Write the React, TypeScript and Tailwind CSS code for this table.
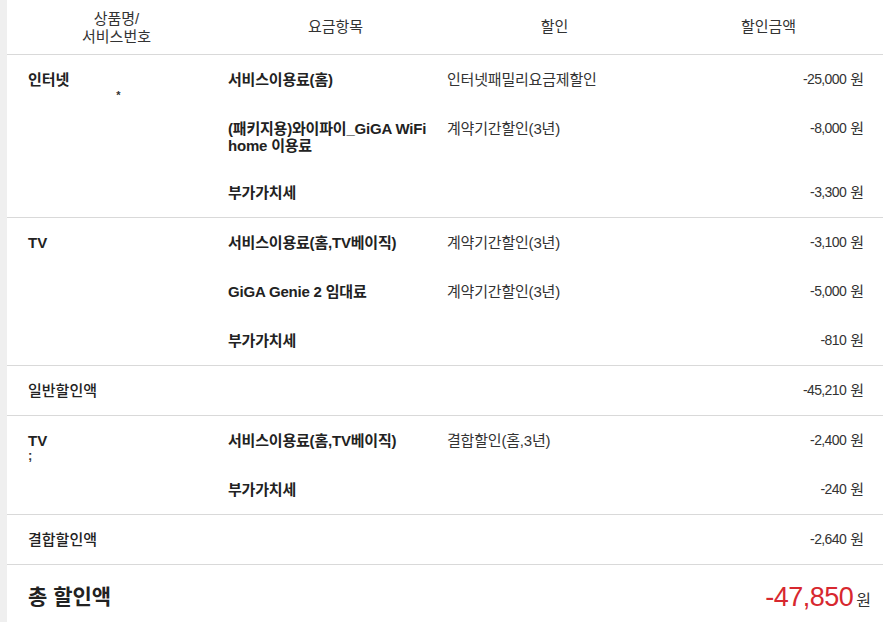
import React from "react";

type Item = { name: string; discount?: string; amount: string; tight?: boolean };
type Group = { label: string; sub?: string; subAlign?: "center" | "left"; items: Item[] };

const font = { fontFamily: '"Liberation Sans", "Noto Sans CJK KR", sans-serif' };

function Amount({ value }: { value: string }) {
  return (
    <div className="flex justify-end items-center gap-[4px] whitespace-nowrap h-[17px] leading-[17px]">
      <span className="text-[14px] tracking-[-0.6px]">{value}</span>
      <span className="text-[15px]">원</span>
    </div>
  );
}

function GroupRow({ group }: { group: Group }) {
  return (
    <div className="flex border-b border-[#d9d9d9]">
      <div className="w-[219px] shrink-0 pl-[21px] pt-4 leading-[17px]">
        <div className="font-bold text-[#222]">{group.label}</div>
        {group.sub && (
          <div
            className={
              group.subAlign === "center"
                ? "text-center pr-[17px] pt-[1px] text-[11px] leading-[12px] font-bold"
                : "text-[13px] leading-[14px] font-bold"
            }
          >
            {group.sub}
          </div>
        )}
      </div>
      <div className="flex-1 flex flex-col">
        {group.items.map((it, i) => (
          <div
            key={i}
            className={it.tight ? "grid grid-cols-3 pt-4 pb-[14px] leading-[17px]" : "grid grid-cols-3 py-4 leading-[17px]"}
          >
            <div className="pl-[2px] font-semibold text-[#222] tracking-[-0.2px]">{it.name}</div>
            <div className="pl-[2px] tracking-[-0.2px]">{it.discount}</div>
            <div className="pr-[19px]">
              <Amount value={it.amount} />
            </div>
          </div>
        ))}
      </div>
    </div>
  );
}

function SummaryRow({ label, amount }: { label: string; amount: string }) {
  return (
    <div className="flex items-center h-[50px] border-b border-[#d9d9d9] leading-[17px]">
      <div className="flex-1 pl-[21px] font-medium text-[#222]">{label}</div>
      <div className="pr-[19px]">
        <Amount value={amount} />
      </div>
    </div>
  );
}

export default function App() {
  const groups1: Group[] = [
    {
      label: "인터넷",
      sub: "*",
      subAlign: "center",
      items: [
        { name: "서비스이용료(홈)", discount: "인터넷패밀리요금제할인", amount: "-25,000" },
        { name: "(패키지용)와이파이_GiGA WiFi home 이용료", discount: "계약기간할인(3년)", amount: "-8,000", tight: true },
        { name: "부가가치세", amount: "-3,300" },
      ],
    },
    {
      label: "TV",
      items: [
        { name: "서비스이용료(홈,TV베이직)", discount: "계약기간할인(3년)", amount: "-3,100" },
        { name: "GiGA Genie 2 임대료", discount: "계약기간할인(3년)", amount: "-5,000" },
        { name: "부가가치세", amount: "-810" },
      ],
    },
  ];
  const groups2: Group[] = [
    {
      label: "TV",
      sub: ";",
      subAlign: "left",
      items: [
        { name: "서비스이용료(홈,TV베이직)", discount: "결합할인(홈,3년)", amount: "-2,400" },
        { name: "부가가치세", amount: "-240" },
      ],
    },
  ];

  return (
    <div className="flex min-h-[622px] bg-white text-[15px] text-[#333]" style={font}>
      <div className="w-[7px] shrink-0 bg-[#efefef]" />
      <div className="flex-1">
        <div className="grid grid-cols-4 h-[55px] items-center border-b border-[#d9d9d9] text-center leading-[18px] text-[#333]">
          <div className="pt-[1px]">
            상품명/
            <br />
            서비스번호
          </div>
          <div>요금항목</div>
          <div>할인</div>
          <div className="pr-[10px]">할인금액</div>
        </div>
        {groups1.map((g, i) => (
          <GroupRow key={i} group={g} />
        ))}
        <SummaryRow label="일반할인액" amount="-45,210" />
        {groups2.map((g, i) => (
          <GroupRow key={i} group={g} />
        ))}
        <SummaryRow label="결합할인액" amount="-2,640" />
        <div className="flex items-center h-[66px] pb-[2px]">
          <div className="flex-1 pl-[21px] text-[21px] font-bold text-[#222]">총 할인액</div>
          <div className="pr-[12px] flex items-baseline gap-[3px]">
            <span className="text-[27px] text-[#d7282f] tracking-[-0.5px]">-47,850</span>
            <span className="text-[16px] text-[#333]">원</span>
          </div>
        </div>
      </div>
    </div>
  );
}
